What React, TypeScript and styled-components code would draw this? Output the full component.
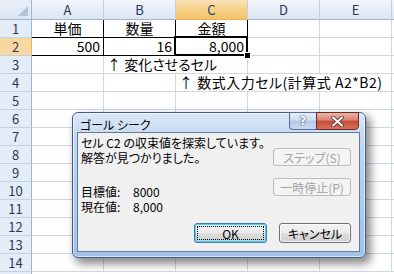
import React from 'react';
import styled, {createGlobalStyle, css} from 'styled-components';

const GlobalStyle = createGlobalStyle`
  html, body {
    margin: 0;
    padding: 0;
    background: #fff;
  }
  body {
    font-family: "Noto Sans CJK JP", sans-serif;
    font-feature-settings: "palt";
  }
`;

const COLS = ['A', 'B', 'C', 'D', 'E'];
const ROW_COUNT = 14;
const SELECTED = {col: 'C', row: 2};

interface CellDef {
  text: string,
  align?: 'left' | 'center' | 'right',
  span?: number,
}

const cellData: Record<string, CellDef> = {
  A1: {text: '単価', align: 'center'},
  B1: {text: '数量', align: 'center'},
  C1: {text: '金額', align: 'center'},
  A2: {text: '500', align: 'right'},
  B2: {text: '16', align: 'right'},
  C2: {text: '8,000', align: 'right'},
  B3: {text: '↑ 変化させるセル', span: 2},
  C4: {text: '↑ 数式入力セル(計算式 A2*B2)', span: 3},
};

// A1:C2 has thin black borders
const isBoxed = (col: string, row: number) => row <= 2 && col <= 'C';

export default function App() {
  const rows = Array.from({length: ROW_COUNT}, (_, i) => i + 1);

  const renderRow = (row: number) => {
    const out: React.ReactNode[] = [];
    out.push(<RowHeader key={`h${row}`} $active={row === SELECTED.row}>{row}</RowHeader>);
    let skip = 0;
    COLS.forEach((col) => {
      if (skip > 0) {
        skip--;
        return;
      }
      const def = cellData[`${col}${row}`];
      const span = def?.span ?? 1;
      skip = span - 1;
      const selected = col === SELECTED.col && row === SELECTED.row;
      out.push(
        <Cell
          key={`${col}${row}`}
          $align={def?.align ?? 'left'}
          $span={span}
          $boxed={isBoxed(col, row)}
          $selected={selected}
        >
          {def?.text}
          {selected && <FillHandle/>}
        </Cell>
      );
    });
    out.push(<Cell key={`x${row}`} $align="left" $span={1} $boxed={false} $selected={false}/>);
    return out;
  };

  return (
    <>
      <GlobalStyle/>
      <Screen>
        <Sheet>
          <Corner/>
          {COLS.map((c) => (
            <ColHeader key={c} $active={c === SELECTED.col}>{c}</ColHeader>
          ))}
          <ColHeader $active={false}/>
          {rows.map(renderRow)}
          {/* the next row, only its top edge shows */}
          <RowHeader $active={false}/>
        </Sheet>

        <Dialog>
          <TitleBar>
            <Title>ゴール シーク</Title>
            <CaptionButtons>
              <HelpButton>?</HelpButton>
              <CloseButton>
                <svg width="13" height="11" viewBox="0 0 13 11">
                  <path d="M2 1.5 L11 9.5 M11 1.5 L2 9.5" stroke="#4a1a14" strokeWidth="3.6" strokeLinecap="round"/>
                  <path d="M2 1.5 L11 9.5 M11 1.5 L2 9.5" stroke="#fff" strokeWidth="2.2" strokeLinecap="round"/>
                </svg>
              </CloseButton>
            </CaptionButtons>
          </TitleBar>

          <Panel>
            <TopRow>
              <Messages>
                <Line>セル C2 の収束値を探索しています。</Line>
                <Line>解答が見つかりました。</Line>
                <Values>
                  <Label>目標値:</Label><span>8000</span>
                  <Label>現在値:</Label><span>8,000</span>
                </Values>
              </Messages>
              <SideButtons>
                <DlgButton $kind="disabled" $width={78}>ステップ(S)</DlgButton>
                <DlgButton $kind="disabled" $width={78}>一時停止(P)</DlgButton>
              </SideButtons>
            </TopRow>
            <Footer>
              <DlgButton $kind="default" $width={73}><FocusRect>OK</FocusRect></DlgButton>
              <DlgButton $kind="normal" $width={72}>キャンセル</DlgButton>
            </Footer>
          </Panel>
        </Dialog>
      </Screen>
    </>
  );
}

const Screen = styled.div`
  position: relative;
  width: 394px;
  height: 274px;
  overflow: hidden;
  background: #fff;
`

const Sheet = styled.div`
  display: grid;
  grid-template-columns: 32px repeat(5, 72px) 1fr;
  grid-template-rows: 20px;
  grid-auto-rows: 18px;
  font-size: 14px;
  color: #000;
`

const headerFace = css`
  box-sizing: border-box;
  display: flex;
  align-items: center;
  justify-content: center;
  font-size: 13px;
  color: #2a3a55;
  border-right: 1px solid #9eb6ce;
  border-bottom: 1px solid #9eb6ce;
`

const Corner = styled.div`
  ${headerFace};
  position: relative;
  background: linear-gradient(#e9eff8, #dbe5f2);

  &::after {
    content: '';
    position: absolute;
    right: 3px;
    bottom: 3px;
    width: 10px;
    height: 10px;
    background: #b3c3d8;
    clip-path: polygon(100% 0, 100% 100%, 0 100%);
  }
`

const ColHeader = styled.div<{ $active: boolean }>`
  ${headerFace};
  border-right-color: #c3d2e3;
  background: ${({$active}) => $active
    ? 'linear-gradient(#fbe3b6, #f6cf86 55%, #f3c46c)'
    : 'linear-gradient(#f4f7fc, #e4ecf7 55%, #dce6f3)'};
  border-bottom-color: ${({$active}) => $active ? '#f2b04f' : '#9eb6ce'};
`

const RowHeader = styled.div<{ $active: boolean }>`
  ${headerFace};
  border-bottom-color: #c3d2e3;
  background: ${({$active}) => $active ? '#f8d8a2' : '#e4ecf7'};
  border-right-color: ${({$active}) => $active ? '#f2b04f' : '#9eb6ce'};
`

const Cell = styled.div<{ $align: string, $span: number, $boxed: boolean, $selected: boolean }>`
  position: relative;
  box-sizing: border-box;
  grid-column: span ${({$span}) => $span};
  padding: 0 3px;
  line-height: 17px;
  white-space: nowrap;
  text-align: ${({$align}) => $align};
  letter-spacing: ${({$span}) => $span > 2 ? '0.5px' : '0'};
  border-right: 1px solid ${({$boxed}) => $boxed ? '#000' : '#d0d7e5'};
  border-bottom: 1px solid ${({$boxed}) => $boxed ? '#000' : '#d0d7e5'};

  ${({$selected}) => $selected && css`
    &::before {
      content: '';
      position: absolute;
      left: -2px;
      top: -2px;
      right: -1px;
      bottom: -1px;
      border: 2px solid #000;
      pointer-events: none;
    }
  `}
`

const FillHandle = styled.span`
  position: absolute;
  right: -4px;
  bottom: -4px;
  width: 5px;
  height: 5px;
  background: #000;
  border: 1px solid #fff;
  z-index: 2;
`

const Dialog = styled.div`
  position: absolute;
  left: 72px;
  top: 112px;
  width: 294px;
  height: 146px;
  box-sizing: border-box;
  display: flex;
  flex-direction: column;
  border: 1px solid #3d5d8c;
  border-radius: 6px;
  background: linear-gradient(#dbe8f8, #c3d8f0 18%, #b0cbec 60%, #a3c1ea);
  box-shadow: inset 0 0 0 1px rgba(255, 255, 255, 0.6), 4px 5px 9px 1px rgba(0, 0, 0, 0.45);
`

const TitleBar = styled.div`
  display: flex;
  align-items: flex-start;
  height: 19px;
`

const Title = styled.div`
  padding: 4px 0 0 7px;
  font-size: 12px;
  line-height: 16px;
  color: #000;
`

const CaptionButtons = styled.div`
  margin-left: auto;
  margin-right: 6px;
  display: flex;
  height: 18px;
  margin-top: -1px;
`

const captionBase = css`
  box-sizing: border-box;
  display: flex;
  align-items: center;
  justify-content: center;
  height: 18px;
`

const HelpButton = styled.div`
  ${captionBase};
  width: 27px;
  border: 1px solid #51709d;
  border-right: none;
  border-radius: 0 0 0 4px;
  background: linear-gradient(#e6eef8, #cfdcee 45%, #b4c9e6 50%, #c8daf0);
  color: #fff;
  font-family: "DejaVu Sans", sans-serif;
  font-weight: bold;
  font-size: 12px;
  text-shadow: 0 0 2px #2c4a78, 0 0 1px #2c4a78;
`

const CloseButton = styled.div`
  ${captionBase};
  width: 43px;
  border: 1px solid #6b2a22;
  border-radius: 0 0 4px 0;
  background: linear-gradient(#eab4a8, #d98372 45%, #c74a35 50%, #d5735c);
`

const Panel = styled.div`
  flex: 1;
  margin: 0 5px 5px 4px;
  box-sizing: border-box;
  display: flex;
  flex-direction: column;
  border: 1px solid #62789c;
  background: #f0f0f0;
  padding: 2px 8px 8px 3px;
  font-size: 12px;
  color: #000;
`

const TopRow = styled.div`
  display: flex;
  align-items: flex-start;
`

const Messages = styled.div`
  flex: 1;
  line-height: 15px;
`

const Line = styled.div``

const Values = styled.div`
  display: grid;
  grid-template-columns: 52px auto;
  justify-content: start;
  margin-top: 19px;
`

const Label = styled.span`
  white-space: nowrap;
`

const SideButtons = styled.div`
  display: flex;
  flex-direction: column;
  gap: 12px;
  margin-top: 13px;
`

const DlgButton = styled.div<{ $kind: 'disabled' | 'default' | 'normal', $width: number }>`
  box-sizing: border-box;
  width: ${({$width}) => $width}px;
  height: ${({$kind}) => $kind === 'disabled' ? 18 : 20}px;
  display: flex;
  align-items: center;
  justify-content: center;
  border-radius: 3px;
  font-size: 12px;
  ${({$kind}) => $kind === 'disabled' && css`
    border: 1px solid #b8bcc0;
    background: #f4f4f4;
    color: #a3a3a3;
  `}
  ${({$kind}) => $kind === 'normal' && css`
    border: 1px solid #707070;
    background: linear-gradient(#f3f3f3, #ebebeb 48%, #dddddd 52%, #cfcfcf);
    box-shadow: inset 0 0 0 1px rgba(255, 255, 255, 0.7);
    color: #000;
  `}
  ${({$kind}) => $kind === 'default' && css`
    border: 1px solid #3c7fb1;
    background: linear-gradient(#f3f3f3, #ebebeb 48%, #dddddd 52%, #cfcfcf);
    box-shadow: inset 0 0 0 1px #48d0f6;
    color: #000;
    padding: 2px;
  `}
`

const FocusRect = styled.div`
  flex: 1;
  align-self: stretch;
  display: flex;
  align-items: center;
  justify-content: center;
  border: 1px dotted #000;
`

const Footer = styled.div`
  margin-top: auto;
  display: flex;
  justify-content: flex-end;
  gap: 12px;
`
